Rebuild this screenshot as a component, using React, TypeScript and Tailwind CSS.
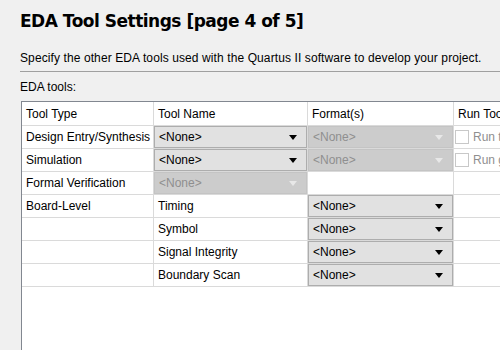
import React from "react";

const font = { fontFamily: '"Liberation Sans", Arial, sans-serif' };

function Arrow({ disabled }: { disabled?: boolean }) {
  return (
    <svg width="8" height="5" viewBox="0 0 8 5" className="shrink-0">
      <path d="M0 0 H8 L4 5 Z" fill={disabled ? "#e8e8e8" : "#000000"} />
    </svg>
  );
}

function Drop({ disabled }: { disabled?: boolean }) {
  return (
    <div
      className={
        "flex h-full w-full items-center justify-between border pl-[4px] pr-[9px] " +
        (disabled
          ? "border-[#c4c4c4] bg-[#cccccc] text-[#8f8f8f]"
          : "border-[#adadad] bg-[#e1e1e1] text-black")
      }
    >
      <span>&lt;None&gt;</span>
      <Arrow disabled={disabled} />
    </div>
  );
}

function Check({ label }: { label: string }) {
  return (
    <div className="flex h-full items-center pl-[1px] text-[#8f8f8f]">
      <div className="h-[14px] w-[14px] shrink-0 border border-[#c8c8c8] bg-white" />
      <span className="ml-[4px] whitespace-nowrap">{label}</span>
    </div>
  );
}

type Cell = React.ReactNode;

function Row({ cells, h = 23 }: { cells: Cell[]; h?: number }) {
  const widths = ["w-[132px]", "w-[154px]", "w-[146px]", "w-[200px]"];
  return (
    <div className="flex" style={{ height: h }}>
      {cells.map((c, i) => (
        <div
          key={i}
          className={
            widths[i] +
            " shrink-0 border-b border-r border-[#dadada] overflow-hidden whitespace-nowrap"
          }
        >
          {typeof c === "string" ? (
            <div className="flex h-full items-center pl-[4px]">{c}</div>
          ) : (
            c
          )}
        </div>
      ))}
    </div>
  );
}

export default function App() {
  return (
    <div
      className="h-[350px] w-[500px] overflow-hidden bg-[#f0f0f0] text-[12px] text-black"
      style={font}
    >
      <div className="pl-[20px] pt-[9px]">
        <div
          className="text-[17px] font-bold leading-[24px]"
          style={{ fontFamily: '"DejaVu Sans", Verdana, sans-serif', letterSpacing: "-0.5px" }}
        >
          EDA Tool Settings [page 4 of 5]
        </div>
        <div className="mt-[18px] whitespace-nowrap leading-[14px]" style={{ letterSpacing: "0.1px" }}>
          Specify the other EDA tools used with the Quartus II software to develop your project.
        </div>
        <div className="mt-[6px] h-[2px] border-t border-[#a0a0a0] border-b-white" />
        <div className="mt-[7px] leading-[14px]">EDA tools:</div>
        <div className="ml-[1px] mt-[7px] h-[260px] border-l border-t border-[#828790] bg-white">
          <Row h={24} cells={["Tool Type", "Tool Name", "Format(s)", "Run Tool Automatically"]} />
          <Row
            cells={[
              "Design Entry/Synthesis",
              <Drop />,
              <Drop disabled />,
              <Check label="Run this tool automatically" />,
            ]}
          />
          <Row
            cells={["Simulation", <Drop />, <Drop disabled />, <Check label="Run gate-level simulation" />]}
          />
          <Row cells={["Formal Verification", <Drop disabled />, "", ""]} />
          <Row cells={["Board-Level", "Timing", <Drop />, ""]} />
          <Row cells={["", "Symbol", <Drop />, ""]} />
          <Row cells={["", "Signal Integrity", <Drop />, ""]} />
          <Row cells={["", "Boundary Scan", <Drop />, ""]} />
        </div>
      </div>
    </div>
  );
}
